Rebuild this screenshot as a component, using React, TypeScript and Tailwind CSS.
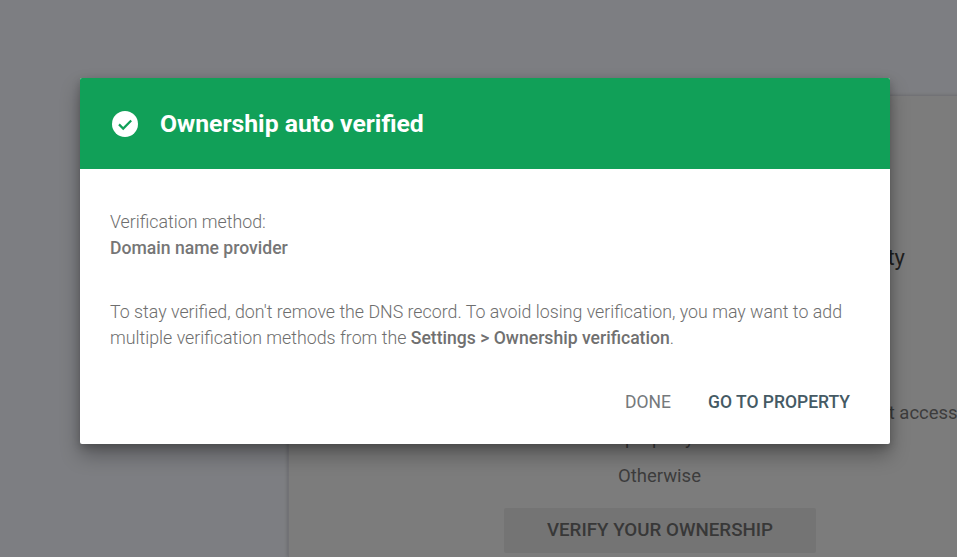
import React from 'react';

const App: React.FC = () => (
  <div className="relative h-[557px] w-[957px] overflow-hidden bg-[#7d7e82] font-['Roboto',sans-serif]">
    <div className="ml-[288px] h-[557px] pt-[95px]">
      <div className="h-[462px] w-[700px] border-l border-t border-[#727276] bg-[#7c7c7c] pt-[147px] pl-[329px] shadow-[-1px_0_3px_rgba(0,0,0,0.15)]">
        <p className="-ml-[329px] w-[616px] text-right text-[22px] leading-[30px] text-[#1f1f1f]">
          Add a property
        </p>
        <p className="mt-[127px] whitespace-nowrap text-[18.5px] leading-[26px] text-[#3c3c3c]">
          If you verify this domain, you'll get access
        </p>
        <p className="-mt-px ml-[7px] text-[18.5px] leading-[26px] text-[#3c3c3c]">property</p>
        <p className="mt-[12px] text-[18.5px] leading-[26px] text-[#3c3c3c]">Otherwise</p>
        <div className="-ml-[114px] mt-[19px] flex h-[45px] w-[312px] items-center justify-center rounded-[2px] bg-[#747474] text-[18.75px] font-medium text-[#383838]">
          VERIFY YOUR OWNERSHIP
        </div>
      </div>
    </div>

    <div className="absolute left-[80px] top-[78px] w-[810px] overflow-hidden rounded-[2px] bg-white shadow-[0_11px_20px_rgba(0,0,0,0.3),0_3px_8px_rgba(0,0,0,0.2)]">
      <div className="flex h-[91px] items-center bg-[#11a058] pl-[32px] text-white">
        <svg width="26" height="26" viewBox="0 0 26 26" aria-hidden="true">
          <circle cx="13" cy="13" r="13" fill="#ffffff" />
          <path d="M7 13.4l4.2 4.2L19.2 9.4" fill="none" stroke="#11a058" strokeWidth="2.2" />
        </svg>
        <h1 className="ml-[22px] text-[24.75px] font-bold leading-[30px]">Ownership auto verified</h1>
      </div>
      <div className="h-[275px] px-[30px] pt-[40px] text-[17.8px] font-light leading-[26px] text-[#6e6e6e]">
        <p>Verification method:</p>
        <p className="text-[17.6px] font-medium text-[#767676]">Domain name provider</p>
        <p className="mt-[38px] w-[750px]">
          To stay verified, don't remove the DNS record. To avoid losing verification, you may want to add
          multiple verification methods from the{' '}
          <span className="text-[17.6px] font-medium text-[#707070]">Settings &gt; Ownership verification</span>.
        </p>
        <div className="mt-[38px] flex justify-end gap-[37px] pr-[10px] text-[17.5px]">
          <span className="font-normal text-[#75797c]">DONE</span>
          <span className="font-medium text-[#455a64]">GO TO PROPERTY</span>
        </div>
      </div>
    </div>
  </div>
);

export default App;
